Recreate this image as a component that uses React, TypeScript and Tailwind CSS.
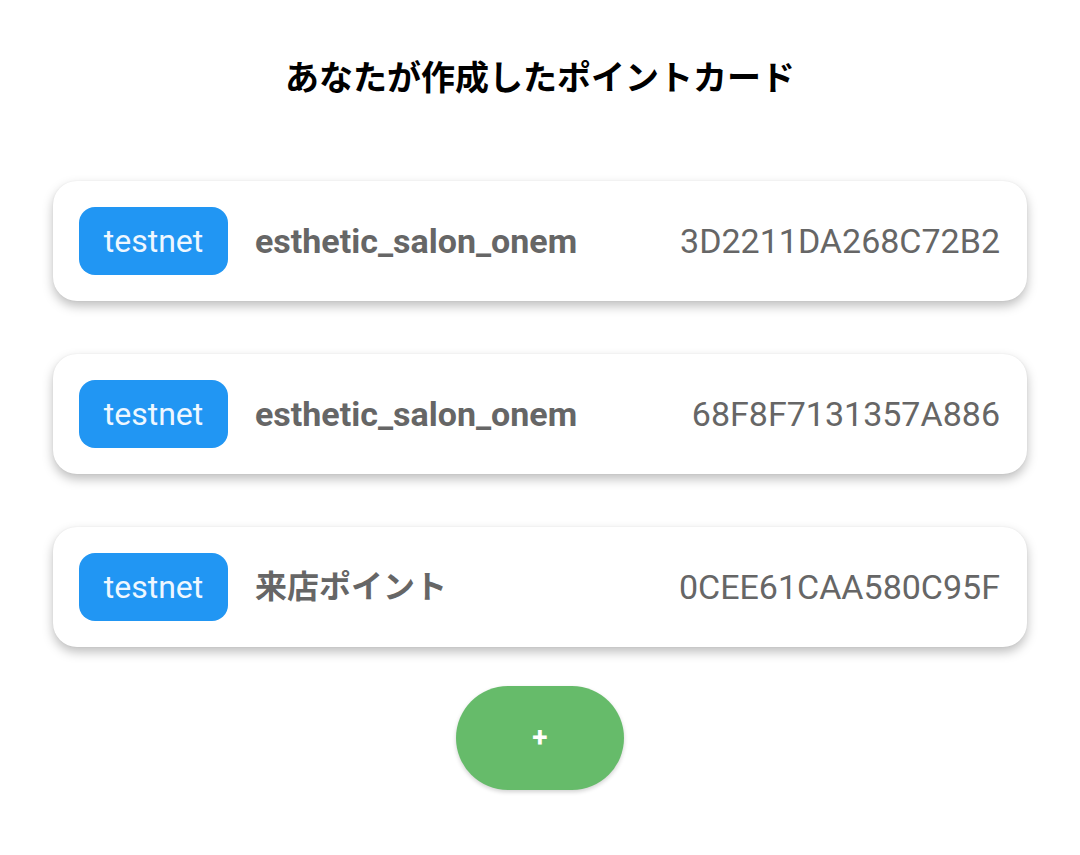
import React from "react";

const cards = [
  { name: "esthetic_salon_onem", id: "3D2211DA268C72B2", cjk: false },
  { name: "esthetic_salon_onem", id: "68F8F7131357A886", cjk: false },
  { name: "来店ポイント", id: "0CEE61CAA580C95F", cjk: true },
];

export default function App() {
  return (
    <div
      className="w-[1080px] min-h-[855px] bg-white flex flex-col items-center"
      style={{ fontFamily: 'Roboto, "Noto Sans CJK JP", sans-serif' }}
    >
      <h1 className="mt-[50px] text-[34px] leading-[56px] font-bold text-black">
        あなたが作成したポイントカード
      </h1>
      <div className="mt-[75px] w-[974px] flex flex-col gap-[53px]">
        {cards.map((c, i) => (
          <div
            key={i}
            className="h-[120px] rounded-[24px] bg-white flex items-center pl-[26px] pr-[27px] shadow-[0_5px_11px_rgba(0,0,0,0.26),0_0_2px_rgba(0,0,0,0.06)]"
          >
            <div className="w-[149px] h-[68px] rounded-[16px] bg-[#2196f3] flex items-center justify-center text-[32px] text-[#eef7ff]">
              testnet
            </div>
            <div
              className={
                c.cjk
                  ? "ml-[27px] text-[32px] font-bold text-[#666666]"
                  : "ml-[27px] text-[34px] font-bold text-[#666666]"
              }
            >
              {c.name}
            </div>
            <div className="ml-auto text-[34px] text-[#666666]">{c.id}</div>
          </div>
        ))}
      </div>
      <button className="mt-[39px] w-[168px] h-[104px] rounded-full bg-[#66bb6a] text-white text-[28px] font-bold flex items-center justify-center shadow-[0_2px_4px_rgba(0,0,0,0.18)]">
        +
      </button>
    </div>
  );
}
